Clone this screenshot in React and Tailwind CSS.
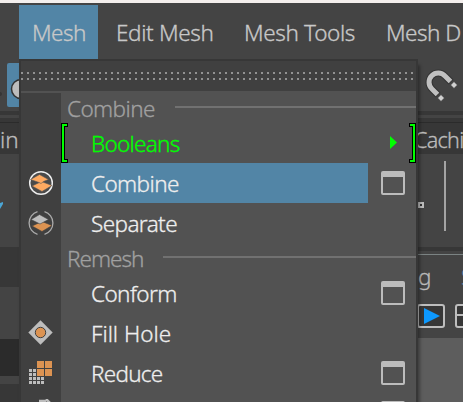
import React from "react";

function OptionBox() {
  return <div className="h-6 w-6 rounded-[2px] border-2 border-t-[6px] border-[#bcbcbc]" />;
}

function CombineIcon() {
  return (
    <svg className="shrink-0" width="26" height="26" viewBox="0 0 26 26">
      <circle cx="13" cy="13" r="11.3" fill="#4a4a4a" stroke="#eeeeee" strokeWidth="1.500" />
      <path d="M4 16 13.500 11.500 24 15.500 14 21.500Z" fill="#ffaa61" stroke="#555" strokeWidth=".6" />
      <path d="M2.500 9.500 11.500 4.500 20.500 9.500 15.500 11.500 13 13.500 11 12.500Z" fill="#ffaa61" stroke="#555" strokeWidth=".6" />
    </svg>
  );
}

function SeparateIcon() {
  return (
    <svg className="shrink-0" width="26" height="26" viewBox="0 0 26 26">
      <path d="M9.500 1.700A11.800 11.800 0 0 0 9.500 24.300M16.500 1.700A11.800 11.800 0 0 1 16.500 24.300" fill="none" stroke="#aaaaaa" strokeWidth="1.300" />
      <path d="M4 16 14 11.500 24 15.500 14 21.500Z" fill="#dc9352" stroke="#404040" strokeWidth=".6" />
      <path d="M3 9.500 11.500 4.500 20.500 9.500 12 14Z" fill="#bdbdbd" stroke="#404040" strokeWidth=".6" />
    </svg>
  );
}

function FillHoleIcon() {
  return (
    <svg className="shrink-0" width="26" height="26" viewBox="0 0 26 26">
      <path d="M12.500 .3 24.700 12.500 12.500 24.700 .3 12.500Z" fill="#bdbdbd" />
      <circle cx="12.500" cy="12.500" r="5.200" fill="#dc9352" stroke="#404040" strokeWidth="1" />
    </svg>
  );
}

function ReduceIcon() {
  const small = [];
  for (let r = 0; r < 4; r++)
    for (let c = 0; c < 4; c++)
      if (r > 1 || c < 2) small.push(<rect key={r * 4 + c} x={1 + c * 4} y={9 + r * 4} width="3" height="3" />);
  return (
    <svg className="shrink-0" width="26" height="26" viewBox="0 0 26 26" shapeRendering="crispEdges">
      <g fill="#bdbdbd">{small}</g>
      <rect x="8" y="0" width="17" height="17" fill="#404040" />
      <g fill="#dc9352">
        <rect x="9" y="1" width="7" height="7" />
        <rect x="17" y="1" width="7" height="7" />
        <rect x="9" y="9" width="7" height="7" />
        <rect x="17" y="9" width="7" height="7" />
      </g>
    </svg>
  );
}

function Header({ label, cls }) {
  return (
    <div className="flex h-[30px] items-center">
      <span className={"ml-[6px] h-[30px] shrink-0 leading-[32px] text-[#a0a0a0] " + cls}>{label}</span>
      <span className="mb-[2px] h-[2px] flex-1 bg-[#717171]" />
    </div>
  );
}

function Item({ label, cls = "tracking-[-0.6px]", option, active }) {
  return (
    <div className="flex h-10">
      <div className={"w-[307px] pl-[30px] leading-[41px] " + (active ? "bg-[#5285a6] " : "") + "text-[#eeeeee]"}>
        <span className={cls}>{label}</span>
      </div>
      {option && <div className="ml-[13px] mt-2"><OptionBox /></div>}
    </div>
  );
}

function Bracket({ flip }) {
  return (
    <svg width="7" height="40" viewBox="0 0 7 40" shapeRendering="crispEdges" className={flip ? "-scale-x-100" : ""}>
      <path d="M0 0H7V4H4V36H7V40H0Z" fill="#000" />
      <path d="M1 1H6V3H3V37H6V39H1Z" fill="#00ff00" />
    </svg>
  );
}

function Menu() {
  return (
    <div className="absolute left-[19px] top-[59px] h-[343px] w-[399px] overflow-hidden border-2 border-b-0 border-[#373737] bg-[#525252] shadow-[2px_6px_3px_0px_rgba(0,0,0,0.35)]">
      <div className="h-[30px] bg-[#404040] pt-[11px]">
        <svg width="395" height="8" viewBox="0 0 395 8" shapeRendering="crispEdges">
          <path d="M0 1H395M0 7H395" stroke="#929292" strokeWidth="2" strokeDasharray="2 4" />
        </svg>
      </div>
      <div className="flex h-[2px]" />
      <div className="flex h-[309px] overflow-hidden">
        <div className="flex w-10 shrink-0 flex-col bg-[#404040] pl-[7px] pt-[77px]">
          <CombineIcon />
          <div className="h-[14px] shrink-0" />
          <SeparateIcon />
          <div className="h-[84px] shrink-0" />
          <FillHoleIcon />
          <div className="h-[14px] shrink-0" />
          <ReduceIcon />
          <svg width="26" height="20" viewBox="0 0 26 20" className="mt-[13px] shrink-0">
            <path d="M11 2h6v8M18 0l3 3-4 6" fill="none" stroke="#bdbdbd" strokeWidth="2.500" />
          </svg>
        </div>
        <div className="flex-1">
          <Header label="Combine" cls="w-[108px] tracking-[-0.6px]" />
          <div className="flex h-10 text-[#00ff00]">
            <Bracket />
            <span className="w-[321px] pl-[23px] leading-[41px] tracking-[-0.75px]">Booleans</span>
            <svg width="20" height="40" viewBox="0 0 20 40"><path d="M1 13 8 19.500 1 26Z" fill="#00ff00" /></svg>
            <Bracket flip />
          </div>
          <Item label="Combine" option active />
          <Item label="Separate" />
          <Header label="Remesh" cls="w-[96px] tracking-[-1px]" />
          <Item label="Conform" option />
          <Item label="Fill Hole" cls="tracking-[0px]" />
          <Item label="Reduce" cls="tracking-[-0.75px]" option />
          <Item label="" option />
        </div>
      </div>
    </div>
  );
}

export default function App() {
  return (
    <div className="relative flex h-[402px] w-[463px] flex-col overflow-hidden whitespace-nowrap bg-[#444444] font-['Noto_Sans',sans-serif] text-[22.5px] font-light tracking-[-0.35px] [-webkit-text-stroke:0.3px]">
      <div className="h-[3px] shrink-0 bg-[#f4efed]" />
      <div className="flex h-14 shrink-0 pt-[2px] leading-[56px] text-[#c8c8c8]">
        <div className="ml-[19px] w-[79px] shrink-0 bg-[#5285a6] pl-[13px] tracking-[-0.5px]">Mesh</div>
        <div className="w-[128px] shrink-0 pl-[18px]">Edit Mesh</div>
        <div className="w-[142px] shrink-0 pl-[18px]">Mesh Tools</div>
        <div className="shrink-0 pl-[18px] tracking-[-0.5px]">Mesh D</div>
      </div>
      <div className="flex h-[52px] shrink-0 justify-between">
        <div className="flex">
          <svg className="w-[7px]" width="7" height="52" viewBox="0 0 7 52"><circle cx="0" cy="35" r="2" fill="#363636" /></svg>
          <div className="mt-1 h-11 w-5 rounded-[2px] bg-[#5285a6]">
            <svg width="20" height="44" viewBox="0 0 20 44"><circle cx="14" cy="26" r="9.500" fill="#bdbdbd" stroke="#333" strokeWidth="1.500" /></svg>
          </div>
        </div>
        <svg width="45" height="50" viewBox="0 0 45 50" fill="none">
          <path d="M33 23 27 17A9.200 9.200 0 1 0 14 30L20 36" stroke="#333" strokeWidth="7" />
          <path d="M32.500 22.500 27 17A9.200 9.200 0 1 0 14 30L19.500 35.500" stroke="#c0c0c0" strokeWidth="5" />
          <path d="M23 35.500 26.500 39 23 42.500 19.500 39ZM36 22.500 39.500 26 36 29.500 32.500 26Z" fill="#d0d0d0" stroke="#333" strokeWidth=".7" />
        </svg>
      </div>
      <div className="flex h-[43px] shrink-0 flex-col">
        <div className="h-1 bg-[#373737]" />
        <div className="h-[3px]" />
        <div className="h-[5px] border-b border-[#2b2b2b] bg-[#373737]" />
        <div className="flex h-[31px] justify-between bg-[#373737] text-[21.5px] leading-[34px] tracking-[-0.7px] text-[#bbbbbb]">
          <span className="text-[22.5px] tracking-[0px]">ing</span>
          <span className="w-[49px]">Cachi</span>
        </div>
      </div>
      <div className="flex h-[93px] shrink-0 justify-between">
        <svg width="19" height="93" viewBox="0 0 19 93"><path d="M0 49 3 48V50L0 55Z" fill="#4ba6d5" /></svg>
        <svg width="45" height="93" viewBox="0 0 45 93">
          <path d="M27 7V77" stroke="#a4a4a4" strokeWidth="2" />
          <path d="M1 49H5V53H1Z" fill="#333" stroke="#bdbdbd" strokeWidth="2" />
        </svg>
      </div>
      <div className="flex h-[155px] shrink-0 justify-between">
        <div className="flex w-[19px] flex-col">
          <div className="h-10 bg-[#373737]" />
          <div className="h-[52px] bg-[#444444]" />
          <div className="h-[37px] bg-[#2b2b2b]" />
          <div className="h-2 bg-[#444444]" />
          <div className="flex-1 bg-[#373737]" />
        </div>
        <div className="flex w-[45px] flex-col bg-[#5d5d5d]">
          <div className="h-1 bg-[#373737]" />
          <div className="h-1 border-b border-[#7b8383] bg-[#444444]" />
          <div className="flex h-[49px] justify-between bg-[#444444] leading-[43px] text-[#bbbbbb]">
            <span>g</span><span className="w-[2px] overflow-hidden text-[#5285a6]">S</span>
          </div>
          <div className="h-[34px] bg-[#444444]">
            <svg width="45" height="27" viewBox="0 0 45 27">
              <rect x="0" y="1" width="26" height="22" rx="2" fill="#373737" stroke="#bdbdbd" strokeWidth="2" />
              <path d="M6 4 22 12 6 20Z" fill="#0d99ff" />
              <rect x="38" y="1" width="20" height="22" rx="2" fill="#373737" stroke="#bdbdbd" strokeWidth="2" />
              <path d="M38 11H45" stroke="#bdbdbd" strokeWidth="2" />
            </svg>
          </div>
        </div>
      </div>
      <Menu />
    </div>
  );
}
